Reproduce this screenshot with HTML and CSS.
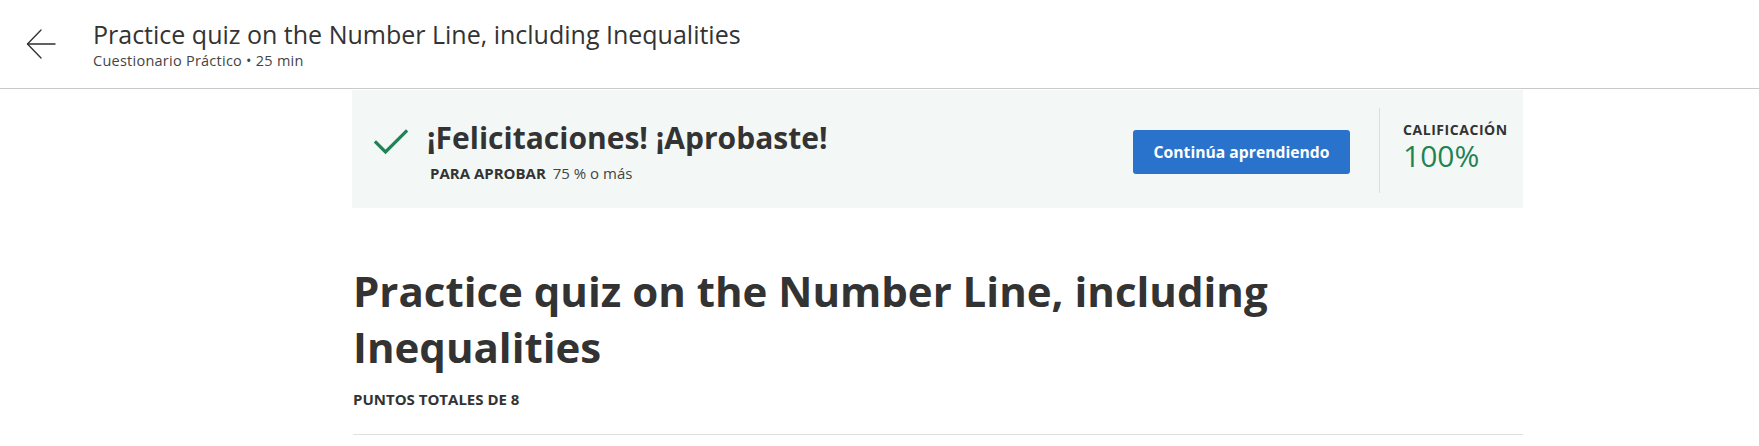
FILE: index.html
```html
<!DOCTYPE html>
<html lang="es">
<head>
<meta charset="utf-8">
<title>Practice quiz on the Number Line, including Inequalities</title>
<link rel="stylesheet" href="styles.css">
</head>
<body>
<header class="topbar">
  <button class="back" aria-label="Volver">
    <svg width="30" height="30" viewBox="0 0 30 30" fill="none" stroke="#2f2f2f" stroke-width="1.3" stroke-linecap="round" stroke-linejoin="round">
      <path d="M29 15H1.5"/>
      <path d="M15 1L1.5 15L15 29"/>
    </svg>
  </button>
  <div class="topbar-text">
    <h1 class="topbar-title">Practice quiz on the Number Line, including Inequalities</h1>
    <div class="topbar-sub">Cuestionario Práctico • 25 min</div>
  </div>
</header>
<main class="main">
  <section class="banner">
    <div class="banner-left">
      <svg class="check" width="34" height="26" viewBox="0 0 34 26" fill="none" stroke="#1f8354" stroke-width="3.2" stroke-linecap="square">
        <path d="M2 13.5L11.5 23L32 2.5"/>
      </svg>
      <div class="banner-text">
        <h2 class="banner-title">¡Felicitaciones! ¡Aprobaste!</h2>
        <div class="banner-pass"><span class="pass-label">PARA APROBAR</span> 75 % o más</div>
      </div>
    </div>
    <div class="banner-right">
      <button class="btn">Continúa aprendiendo</button>
      <div class="vdiv"></div>
      <div class="grade">
        <div class="grade-label">CALIFICACIÓN</div>
        <div class="grade-value">100%</div>
      </div>
    </div>
  </section>
  <h1 class="quiz-title">Practice quiz on the Number Line, including Inequalities</h1>
  <div class="points">PUNTOS TOTALES DE 8</div>
  <hr class="rule">
</main>
</body>
</html>
```

FILE: styles.css
```css
* { box-sizing: border-box; }
html, body { margin: 0; padding: 0; background: #fff; }
body {
  font-family: "Open Sans", "Noto Sans", Arial, sans-serif;
  color: #333;
  overflow: hidden;
}
.topbar {
  height: 89px;
  border-bottom: 1px solid #c9c9c9;
  display: flex;
  align-items: center;
  padding-left: 26px;
}
.back {
  border: 0;
  background: none;
  padding: 0;
  width: 30px;
  height: 30px;
  margin-right: 37px;
  cursor: pointer;
}
.back svg { display: block; }
.topbar-text { margin-top: 0; }
.topbar-title {
  margin: 0;
  font-size: 25px;
  font-weight: 400;
  line-height: 34px;
  color: #333;
}
.topbar-sub {
  font-size: 14.5px;
  line-height: 20px;
  letter-spacing: 0.25px;
  color: #444;
}
.main {
  width: 1171px;
  margin-left: 352px;
  padding-top: 1px;
}
.banner {
  height: 118px;
  background: #f3f8f6;
  display: flex;
  align-items: center;
  justify-content: space-between;
  padding: 0 16px 0 22px;
}
.banner-left {
  display: flex;
  align-items: flex-start;
  align-self: flex-start;
  padding-top: 29px;
}
.check {
  display: block;
  margin-top: 10px;
  margin-right: 19px;
}
.banner-title {
  margin: 0;
  font-size: 30px;
  font-weight: 700;
  line-height: 38px;
  color: #333;
}
.banner-pass {
  margin-top: 6px;
  margin-left: 3px;
  font-size: 15px;
  line-height: 20px;
  color: #444;
}
.pass-label { font-weight: 700; margin-right: 3px; color: #333; }
.banner-right {
  display: flex;
  align-items: center;
}
.btn {
  width: 217px;
  height: 44px;
  border: 0;
  border-radius: 3px;
  background: #2a73cc;
  color: #fff;
  font-family: inherit;
  font-size: 15.7px;
  line-height: 20px;
  font-weight: 700;
  margin-top: 6px;
  margin-right: 29px;
}
.vdiv {
  width: 1px;
  height: 85px;
  background: #dedede;
  margin-top: 3px;
  margin-right: 23px;
}
.grade { width: 104px; margin-top: -6px; }
.grade-label {
  font-size: 14px;
  font-weight: 700;
  color: #333;
  line-height: 20px;
  letter-spacing: 0.55px;
}
.grade-value {
  font-size: 30px;
  line-height: 32px;
  color: #1f8354;
}
.quiz-title {
  margin: 55px 0 0 1px;
  font-size: 42px;
  line-height: 56px;
  font-weight: 700;
  color: #333;
}
.points {
  margin: 14px 0 0 1px;
  font-size: 15px;
  line-height: 20px;
  font-weight: 700;
  color: #333;
}
.rule {
  border: 0;
  border-top: 1px solid #e0e0e0;
  margin: 25px 0 0 1px;
}
```
